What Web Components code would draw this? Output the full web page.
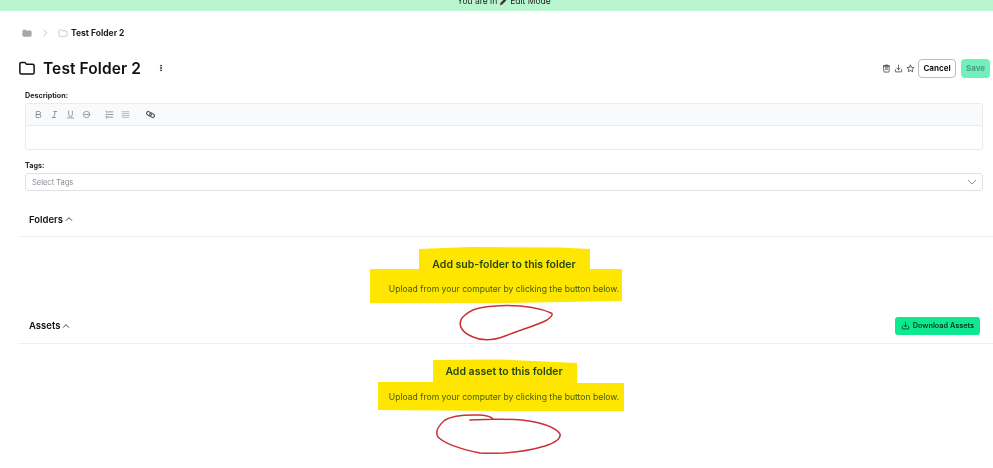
<!DOCTYPE html>
<html lang="en"><head><meta charset="utf-8"><title>Test Folder 2</title>
<style>
html,body{margin:0;padding:0;background:#fff;height:468px;overflow:hidden}
body{font-family:Inter,"Liberation Sans",sans-serif;color:#111;position:relative}
</style></head><body>
<folder-page></folder-page>
<script>
const I={
folder:'<path d="M2.5 6.5a2 2 0 0 1 2-2h4.6l2.2 2.5h8.2a2 2 0 0 1 2 2v9a2 2 0 0 1-2 2h-15a2 2 0 0 1-2-2z"/>',
trash:'<path d="M5 6h14v14a1.5 1.5 0 0 1-1.500 1.500h-11A1.500 1.500 0 0 1 5 20zM4 4.500h16M9 3h6M9 10h6M9 14h6"/>',
download:'<path d="M12 3v12M7 10.500l5 5 5-5M3.500 15v5a1 1 0 0 0 1 1h15a1 1 0 0 0 1-1v-5"/>',
star:'<path d="M12 3l2.800 5.900 6.400.8-4.700 4.400 1.200 6.400L12 17.400l-5.700 3.100 1.200-6.400-4.700-4.400 6.400-.8z"/>',
up:'<path d="M4 16l8-8 8 8"/>',down:'<path d="M3 8l9 9 9-9"/>',right:'<path d="M8 3l9 9-9 9"/>',
bold:'<path d="M7 4h6.500a4 4 0 0 1 0 8H7zM7 12h7.500a4 4 0 0 1 0 8H7z"/>',
italic:'<path d="M10 4h8M6 20h8M14 4l-4 16"/>',
underline:'<path d="M7 3v9a5 5 0 0 0 10 0V3M4 21h16"/>',
strike:'<circle cx="12" cy="12" r="8.500"/><path d="M7 12h10"/>',
ol:'<path d="M9 5h12M9 12h12M9 19h12M3 3.500h2v5M3 12h3M3 17h3v4H3"/>',
ul:'<path d="M3 4.500h18M3 9.500h18M3 14.500h18M3 19.500h18"/>',
link:'<rect x="1" y="5.500" width="14" height="9" rx="4.500" stroke-width="3.200" transform="rotate(40 8 10)"/><rect x="9" y="9.500" width="14" height="9" rx="4.500" stroke-width="3.200" transform="rotate(40 16 14)"/>',
pencil:'<path d="M4 20l1.500-5L16 4.500l3.500 3.500L9 18.500z" fill="currentColor"/>',
dots:'<circle cx="12" cy="5" r="1.800" fill="currentColor"/><circle cx="12" cy="12" r="1.800" fill="currentColor"/><circle cx="12" cy="19" r="1.800" fill="currentColor"/>',
home:'<path d="M2 7a2 2 0 0 1 2-2h5l2 2h9a2 2 0 0 1 2 2v9a2 2 0 0 1-2 2H4a2 2 0 0 1-2-2z" fill="currentColor"/>'
};
function def(name,css,html){customElements.define(name,class extends HTMLElement{
 connectedCallback(){if(this.shadowRoot)return;const r=this.attachShadow({mode:'open'});
 r.innerHTML='<style>'+css+'</style>'+(typeof html==='function'?html(this):html);}});}

def('ui-icon',':host{display:inline-flex;flex:none;width:var(--s,12px);height:var(--s,12px)}svg{width:100%;height:100%;fill:none;stroke:currentColor;stroke-width:var(--w,2);stroke-linecap:round;stroke-linejoin:round;display:block}',
 h=>'<svg viewBox="0 0 24 24">'+I[h.getAttribute('name')]+'</svg>');

def('edit-banner',':host{display:block;height:11px;background:#b9f5cf;overflow:hidden;font-size:8.500px;line-height:11px;color:#222;padding-left:15px}div{margin-top:-4px;display:flex;justify-content:center;align-items:center;gap:2px}ui-icon{--s:9px;color:#333}',
 '<div>You are in <ui-icon name="pencil"></ui-icon> Edit Mode</div>');

def('bread-crumb',':host{display:flex;align-items:center;height:14px;margin:15px 0 0 22px;font-size:8.500px;font-weight:700;color:#1c1c1c}.h{--s:10px;color:#a5a8ad;margin-right:9px}.c{--s:8px;color:#a0a0a0;margin-right:9px;--w:1.800}.f{--s:10px;color:#b0b0b0;margin-right:3px;--w:1.500}',
 '<ui-icon class="h" name="home"></ui-icon><ui-icon class="c" name="right"></ui-icon><ui-icon class="f" name="folder"></ui-icon><span>Test Folder 2</span>');

def('page-header',':host{display:flex;align-items:center;height:28px;margin:14px 3px 0 18px}.fi{--s:18px;--w:2;color:#111;margin-right:7px}h1{margin:0;font-size:15.500px;font-weight:600;letter-spacing:.1px;color:#111}.more{--s:8px;margin-left:16px;color:#333}.sp{flex:1}.a{--s:9px;color:#333;margin-right:2px;--w:2}.a+.a{margin-left:1px}button{font:700 8px Inter,"Liberation Sans",sans-serif;height:19px;border-radius:4px;padding:0;cursor:pointer}.cancel{width:38px;background:#fff;border:1px solid #bdbdbd;color:#111;margin:0 5px 0 1px}.save{width:29px;background:#6ff0bd;border:0;color:#4f9c80}',
 '<ui-icon class="fi" name="folder"></ui-icon><h1>Test Folder 2</h1><ui-icon class="more" name="dots"></ui-icon><span class="sp"></span><ui-icon class="a" name="trash"></ui-icon><ui-icon class="a" name="download"></ui-icon><ui-icon class="a" name="star"></ui-icon><button class="cancel">Cancel</button><button class="save">Save</button>');

def('rich-editor',':host{display:block;margin:9px 10px 0 25px}label{display:block;font-size:7.200px;font-weight:700;line-height:10px;color:#222;margin-bottom:2px}.box{border:1px solid #e9ecef;border-radius:3px;height:47px;box-sizing:border-box}.tb{height:22px;background:#f8fafb;border-bottom:1px solid #e9ecef;display:flex;align-items:center;padding-left:8px;color:#767d86;box-sizing:border-box}ui-icon{--s:9px;--w:2;margin-right:7px}.g{margin-right:14px}.l{margin-left:2px;color:#5f666e}.u{--w:1.600;color:#8b9199}',
 '<label>Description:</label><div class="box"><div class="tb"><ui-icon name="bold"></ui-icon><ui-icon name="italic"></ui-icon><ui-icon name="underline"></ui-icon><ui-icon class="g" name="strike"></ui-icon><ui-icon name="ol"></ui-icon><ui-icon class="g u" name="ul"></ui-icon><ui-icon class="l" name="link"></ui-icon></div></div>');

def('tag-select',':host{display:block;margin:11px 10px 0 25px}label{display:block;font-size:7.200px;font-weight:700;line-height:10px;color:#222;margin-bottom:2px}.s{height:18px;box-sizing:border-box;border:1px solid #dfe2e5;border-radius:3px;display:flex;align-items:center;justify-content:space-between;padding:0 5px 0 6px;font-size:7.500px;color:#868c92}ui-icon{--s:10px;--w:2.400;color:#7d8a99}',
 '<label>Tags:</label><div class="s"><span>Select Tags</span><ui-icon name="down"></ui-icon></div>');

def('asset-section',':host{display:block;margin-left:18px}.head{display:flex;align-items:center;justify-content:space-between;padding:var(--ht,0) 13px 0 11px;border-bottom:1px solid #eeeff0;height:var(--hh,34px);box-sizing:border-box;font-size:9.500px;font-weight:600;color:#111}.t{display:flex;align-items:center;gap:2px}ui-icon{--s:8px;--w:2.400}',
 h=>'<div class="head"><span class="t">'+h.getAttribute('title')+' <ui-icon name="up"></ui-icon></span><slot name="action"></slot></div><slot></slot>');

def('empty-state',':host{display:block;position:relative;text-align:center;margin-left:-18px;padding-left:15px;color:#26470a;height:var(--eh,72px)}h3{position:relative;margin:0;padding-top:21px;font-size:10.500px;line-height:14px;font-weight:600}p{position:relative;margin:var(--pg,11px) 0 0;font-size:8.600px;line-height:12px;color:#3f5a10}svg{position:absolute;left:0;top:0;width:993px;height:468px;overflow:visible;pointer-events:none}',
 h=>'<svg style="top:'+h.getAttribute('oy')+'px"><polygon fill="#ffe600" points="'+h.getAttribute('hl')+'"/><path fill="none" stroke="#cb3234" stroke-width="1.500" stroke-linejoin="round" d="'+h.getAttribute('red')+'"/></svg><h3>'+h.getAttribute('head')+'</h3><p>Upload from your computer by clicking the button below.</p>');

def('green-button',':host{display:inline-flex}button{display:flex;align-items:center;gap:3px;height:18px;padding:0 6px;background:#0ee88f;border:0;border-radius:3px;font:600 7.300px Inter,"Liberation Sans",sans-serif;color:#0c3322}ui-icon{--s:9px;--w:2}',
 '<button><ui-icon name="download"></ui-icon><slot></slot></button>');

def('folder-page',':host{display:block;width:993px;height:468px;overflow:hidden;filter:blur(.3px)}.f{--hh:46px;--ht:11px}.a{--hh:36px}',
 `<edit-banner></edit-banner><bread-crumb></bread-crumb><page-header></page-header><rich-editor></rich-editor><tag-select></tag-select>
 <asset-section class="f" title="Folders"><empty-state style="--eh:71px" oy="-237" head="Add sub-folder to this folder" hl="419,249 470,247 560,247.500 590,249 590,269 622,269 622,301 500,303 370,303 370,269 419,269" red="M551.700 313.300C540 308 520 305 500 305.700S470 309 462 318C457 326 463 333 473 337C482 341 492 341 505 336C520 330 538 325 547 320C551 317 553 315 551.700 313.300Z"></empty-state></asset-section>
 <asset-section class="a" title="Assets"><green-button slot="action">Download Assets</green-button><empty-state style="--eh:120px;--pg:12px" oy="-344" head="Add asset to this folder" hl="433,360 500,359.500 577,363 577,383 624,383 624,411 500,411 378,410 378,382 433,382" red="M469.300 420L493.300 419.300C491 416.500 488 415.500 480 415C465 414.500 452 415.500 445 420C438 426 435 432 438 437C444 443 460 449 480 453C500 454 525 452 545 446C555 443 561 439 560 434C557 429 548 425 535 422C520 419 505 419 493.300 419.300"></empty-state></asset-section>`);
</script>
</body></html>
